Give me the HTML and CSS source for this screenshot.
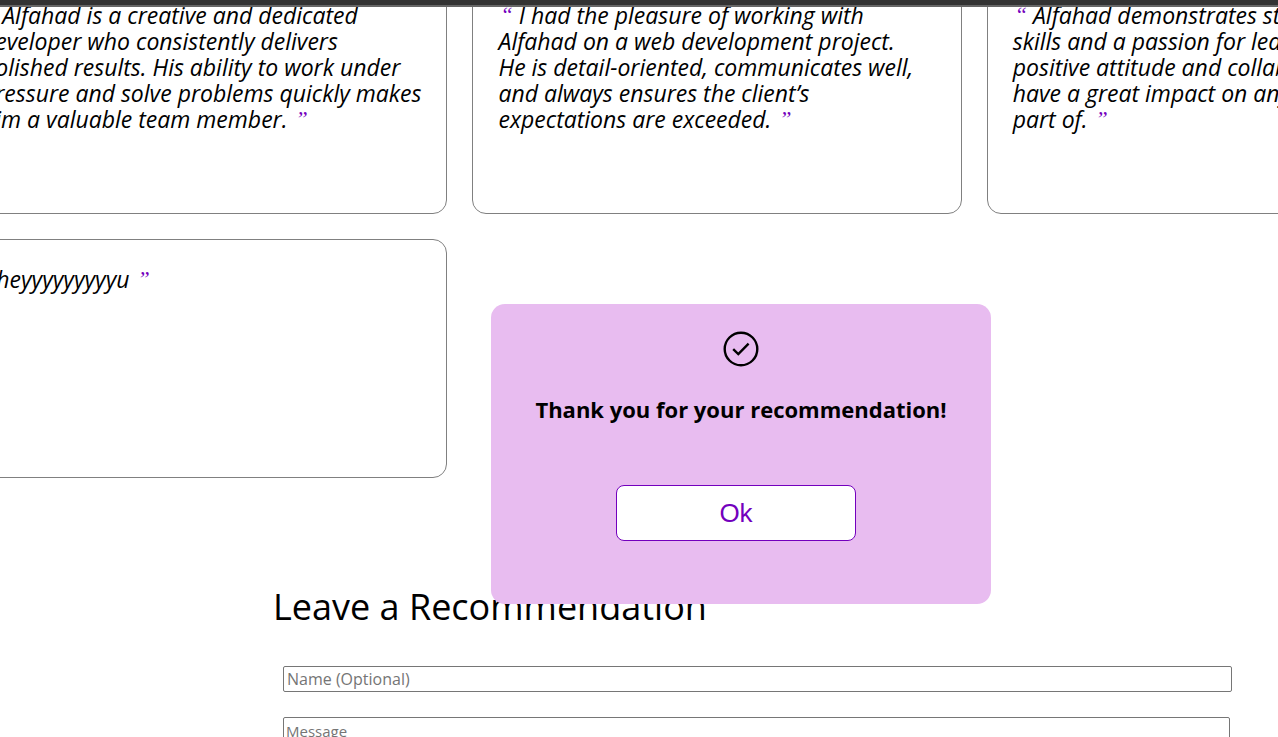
FILE: index.html
```
<!DOCTYPE html>
<html lang="en">
<head>
  <meta charset="utf-8">
  <meta name="viewport" content="width=device-width, initial-scale=1">
  <title>Recommendations</title>
  <link rel="stylesheet" href="styles.css">
</head>
<body>
  <header class="topbar"></header>
  <main class="page">
    <section class="cards" aria-label="Recommendations">
      <blockquote class="card"><span class="quote">“</span> Alfahad is a creative and dedicated<br>developer who consistently delivers<br>polished results. His ability to work under<br>pressure and solve problems quickly makes<br>him a valuable team member. <span class="quote">”</span></blockquote>
      <blockquote class="card"><span class="quote">“</span> I had the pleasure of working with<br>Alfahad on a web development project.<br>He is detail-oriented, communicates well,<br>and always ensures the client’s<br>expectations are exceeded. <span class="quote">”</span></blockquote>
      <blockquote class="card"><span class="quote">“</span> Alfahad demonstrates strong<br>skills and a passion for learning. His<br>positive attitude and collaboration<br>have a great impact on any team he is<br>part of. <span class="quote">”</span></blockquote>
      <blockquote class="card"><span class="quote">“</span>heyyyyyyyyyu <span class="quote">”</span></blockquote>
    </section>

    <section class="recommend">
      <h2 class="recommend-title">Leave a Recommendation</h2>
      <form class="recommend-form">
        <input class="field" type="text" aria-label="Name (Optional)" placeholder="Name (Optional)">
        <textarea class="field field-message" aria-label="Message" placeholder="Message"></textarea>
      </form>
    </section>
  </main>

  <div class="popup" role="dialog" aria-labelledby="popup-title">
    <svg class="popup-icon" viewBox="0 0 36 36" fill="none" stroke="currentColor" stroke-width="2.4" aria-hidden="true">
      <circle cx="18" cy="18" r="16.3"/>
      <path d="M10.2 18.2 L15.3 23 L25.6 12.7"/>
    </svg>
    <h3 class="popup-title" id="popup-title">Thank you for your recommendation!</h3>
    <button class="popup-button" type="button">Ok</button>
  </div>
</body>
</html>
```
FILE: styles.css
```
* {
  box-sizing: border-box;
}

body {
  margin: 0;
  height: 100vh;
  overflow: hidden;
  background: #fff;
  color: #000;
  font-family: "Trebuchet MS", "Open Sans", sans-serif;
}

.topbar {
  position: fixed;
  inset: 0 0 auto;
  z-index: 1;
  height: 7px;
  background: #333;
  border-bottom: 2px solid #666;
}

.page {
  height: 100%;
  overflow: hidden;
}

/* The carousel is wider than the window on both sides. */
.cards {
  display: grid;
  grid-template-columns: repeat(3, 1fr);
  grid-auto-rows: 239px;
  gap: 25px;
  margin: -25px -198px 0 -44px;
}

.card {
  margin: 0;
  padding: 26px 25px;
  border: 1px solid gray;
  border-radius: 14px;
  font-size: 23px;
  font-style: italic;
  line-height: 26px;
  white-space: nowrap;
}

.quote {
  padding-left: 2px;
  color: #7300bd;
  font-family: "Liberation Serif", serif;
  font-size: 22px;
  line-height: 1;
  vertical-align: 2px;
}

.recommend {
  padding: 100px 46px 0 273px;
}

.recommend-title {
  margin: 0;
  font-size: 36px;
  font-weight: 400;
  line-height: 58px;
}

.recommend-form {
  display: flex;
  flex-direction: column;
  gap: 25px;
  padding: 30px 0 0 10px;
}

.field {
  width: 100%;
  height: 26px;
  padding: 1px 3px;
  border: 1px solid #767676;
  border-radius: 2px;
  background: #fff;
  font-family: inherit;
  font-size: 16px;
  line-height: 22px;
}

.field::placeholder {
  color: #757575;
}

.field-message {
  width: calc(100% - 2px);
  height: 120px;
  padding: 2px;
  font-size: 15px;
}

.popup {
  position: fixed;
  top: 304px;
  left: 491px;
  z-index: 2;
  display: flex;
  flex-direction: column;
  align-items: center;
  width: 500px;
  height: 300px;
  padding-top: 27px;
  border-radius: 14px;
  background: #e8bcf0;
}

.popup-icon {
  width: 36px;
  height: 36px;
}

.popup-title {
  margin: 27px 0 61px;
  font-size: 22px;
  font-weight: 700;
  line-height: 30px;
}

.popup-button {
  width: 240px;
  height: 56px;
  margin-right: 10px;
  border: 1px solid #7300bd;
  border-radius: 8px;
  background: #fff;
  color: #7300bd;
  font-family: "Liberation Sans", Arial, sans-serif;
  font-size: 26px;
}
```
